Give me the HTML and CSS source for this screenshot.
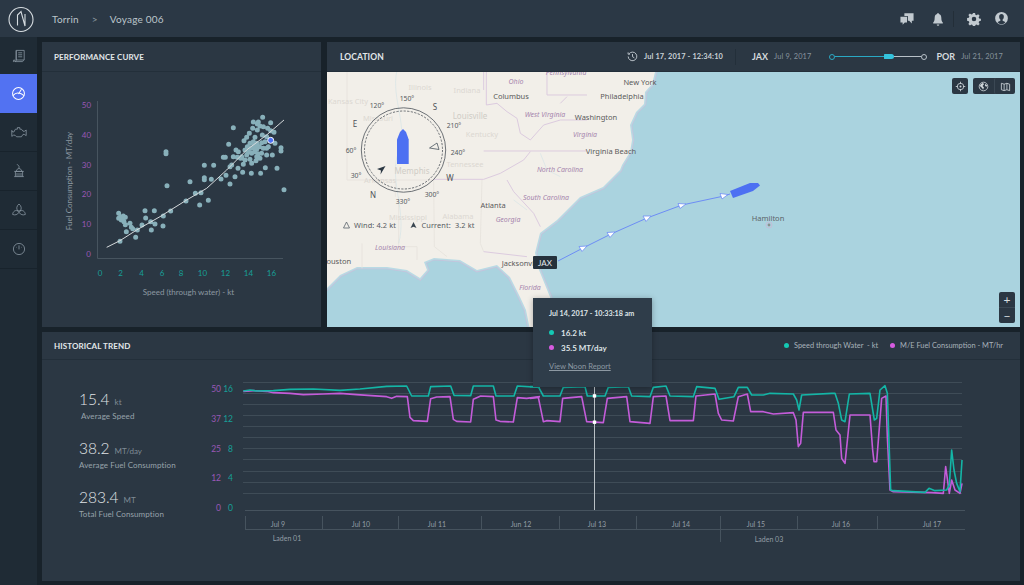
FILE: index.html
```html
<!DOCTYPE html>
<html lang="en">
<head>
<meta charset="utf-8">
<title>Voyage 006</title>
<link rel="stylesheet" href="styles.css">
</head>
<body>
<div class="app">
  <header class="topbar">
    <div class="brand">
      <svg class="logo" viewBox="0 0 42 37"><circle cx="21" cy="19.5" r="12"/><path d="M17.5 25.5V15L21 11.500 25 26V14"/></svg>
    </div>
    <nav class="crumbs"><span>Torrin</span><span class="sep">&gt;</span><span>Voyage 006</span></nav>
    <div class="top-icons">
      <svg class="ti" viewBox="0 0 16 16"><path d="M5 1.500h10.500v8.500h-2v3L10.500 10H9V4.500H5z"/><path d="M.5 5.500h7.500v6.500H5.500L3 14.500V12H.5z"/></svg>
      <svg class="ti bell" viewBox="0 0 16 16"><path d="M8 1.200c.7 0 1 .5 1 1 2 .5 2.800 2.200 2.800 4.300 0 3 .6 4.500 1.700 5.500v1H2.500v-1c1.100-1 1.700-2.500 1.700-5.500C4.200 4.400 5 2.700 7 2.200c0-.5.300-1 1-1z"/><path d="M6.500 14.200h3a1.500 1.500 0 0 1-3 0z"/></svg>
      <span class="top-div"></span>
      <svg class="ti gear" viewBox="0 0 16 16"><path d="M6.800 1h2.400l.4 2 1.300.6 1.800-1.100 1.700 1.700-1.100 1.800.6 1.300 2 .4v2.400l-2 .4-.6 1.300 1.100 1.800-1.700 1.700-1.800-1.100-1.300.6-.4 2H6.800l-.4-2-1.300-.6-1.800 1.100-1.700-1.700 1.100-1.800-.6-1.300-2-.4V6.900l2-.4.6-1.300-1.100-1.800 1.700-1.700 1.800 1.100 1.300-.6zM8 5.400a2.600 2.600 0 1 0 0 5.200 2.600 2.600 0 0 0 0-5.200z" fill-rule="evenodd"/></svg>
      <svg class="ti user" viewBox="0 0 16 16"><path fill-rule="evenodd" d="M8 1a6.800 6.800 0 1 1 0 13.600A6.800 6.800 0 0 1 8 1zm0 2.200c-1.600 0-2.500 1.200-2.500 2.900 0 1.300.5 2.400 1.300 3v1.200c-1.300.4-2.400 1-3 1.700a5.300 5.300 0 0 0 8.400 0c-.6-.7-1.700-1.300-3-1.700V9.100c.8-.6 1.300-1.700 1.300-3 0-1.700-.9-2.900-2.500-2.900z"/></svg>
    </div>
  </header>

  <div class="main">
    <aside class="sidebar">
      <a class="nav-item"><svg viewBox="0 0 20 20"><path d="M6.500 3h10v12h-10zM6.500 3v12.500c0 1-.5 1.500-1.500 1.500h9c1 0 1.500-.7 1.500-2M3 17c1.500 0 2-.5 2-1.800H3.200C3 16 3 16.500 3 17zM9 6h5M9 8.500h5M9 11h5"/></svg></a>
      <a class="nav-item active"><svg viewBox="0 0 20 20"><circle cx="10" cy="10" r="7"/><path d="M3.500 12.500c2-2.400 4.300-3.300 6.500-3 2.200.2 4.300 1.200 6.500 3M10 10.500l3.500-5.500"/></svg></a>
      <a class="nav-item"><svg viewBox="0 0 20 20"><path d="M1 8l1 2h1.500l2-3.500h2.500V4.500h3v2h2l2 2.500h2L19 7.500v7L16.500 13h-1.500l-2 3H7L5 14H3l-2 1.500z"/></svg></a>
      <a class="nav-item"><svg viewBox="0 0 20 20"><path d="M4 17h12M5.500 17v-6.500h9V17M4 10.500h12M6.500 10.500c.5-2.500 1.800-3.500 3.500-3.500s3 1 3.500 3.500M10 7V4L7.500 1.500M7.500 12.500v4.500M10 12.500v4.500M12.500 12.500v4.500"/></svg></a>
      <a class="nav-item"><svg viewBox="0 0 20 20"><path d="M10 2.500c3 2.500 3.500 5.500 1.800 8.500H8.200C6.500 8 7 5 10 2.500zM8.200 11c-3-1-5.500.5-6.200 4.500 3 1.300 6 .5 8-2.500 2 3 5 3.800 8 2.500-.7-4-3.200-5.500-6.200-4.500M10 13l-2-2.500M10 13l2-2.500"/></svg></a>
      <a class="nav-item"><svg viewBox="0 0 20 20"><circle cx="10" cy="10" r="7"/><path d="M10 5.500v5M6.500 7.500l.6.6M13.500 7.500l-.6.6"/></svg></a>
    </aside>

    <div class="content">
      <section class="panel perf">
        <div class="panel-head"><h2>Performance Curve</h2></div>
        <svg class="chart-svg perf-svg" viewBox="42 72 279 255">
          <path class="axis" d="M97.500 101V258.500H283"/>
          <g class="tick-p" text-anchor="middle">
            <text x="86.500" y="108">50</text><text x="86.500" y="138">40</text><text x="86.500" y="167.500">30</text><text x="86.500" y="197">20</text><text x="86.500" y="227">10</text><text x="88.500" y="257">0</text>
          </g>
          <g class="tick-t" text-anchor="middle">
            <text x="100" y="276">0</text><text x="120.500" y="276">2</text><text x="141.500" y="276">4</text><text x="162" y="276">6</text><text x="181" y="276">8</text><text x="202.500" y="276">10</text><text x="225.500" y="276">12</text><text x="248.500" y="276">14</text><text x="271.500" y="276">16</text>
          </g>
          <text class="axis-label" x="188.500" y="295" text-anchor="middle">Speed (through water) - kt</text>
          <text class="axis-label" transform="translate(72 181) rotate(-90)" text-anchor="middle">Fuel Consumption - MT/day</text>
          <g transform="scale(.33333)">
            <path class="dots" d="M356 640h0M362 650h0M370 648h0M376 652h0M356 655h0M364 660h0M372 665h0M376 674h0M390 670h0M394 682h0M379 695h0M398 686h0M412 690h0M407 712h0M360 724h0M426 675h0M435 632h0M437 654h0M463 632h0M452 665h0M465 672h0M454 690h0M490 648h0M489 678h0M512 633h0M498 455h0M498 461h0M501 557h0M558 603h0M570 545h0M586 580h0M603 578h0M599 615h0M625 601h0M613 496h0M641 496h0M613 533h0M613 539h0M634 538h0M663 537h0M670 472h0M676 472h0M678 526h0M690 552h0M690 500h0M695 495h0M686 433h0M700 383h0M705 530h0M714 505h0M730 493h0M728 517h0M754 520h0M782 520h0M796 503h0M831 505h0M852 569h0M843 443h0M843 453h0M817 465h0M800 465h0M790 380h0M788 352h0M812 368h0M760 366h0M775 366h0M772 372h0M780 378h0M803 385h0M812 392h0M822 397h0M772 390h0M758 385h0M748 400h0M740 412h0M732 422h0M765 412h0M787 405h0M800 410h0M795 425h0M785 428h0M805 440h0M800 445h0M825 430h0M790 445h0M778 440h0M770 430h0M760 425h0M750 430h0M742 440h0M735 450h0M745 455h0M755 460h0M765 455h0M770 448h0M760 445h0M752 445h0M762 438h0M768 438h0M740 465h0M725 470h0M715 455h0M708 450h0M700 470h0M712 472h0M722 475h0M735 480h0M750 478h0M768 482h0M755 490h0M770 470h0M785 460h0M775 462h0M780 475h0"/>
            <path class="fit" d="M320 742L360 722 410 690 480 650 560 600 620 565 680 510 740 450 800 405 852 360"/>
            <circle class="hit" cx="812" cy="421" r="9"/>
          </g>
        </svg>
      </section>

      <section class="panel loc">
        <div class="panel-head loc-head">
          <h2>Location</h2>
          <div class="loc-meta">
            <svg class="clock" viewBox="0 0 12 12"><path d="M2.300 3A4.700 4.700 0 1 1 1.300 6M1.200 1.500V3.500H3.200M6 3.300V6.200L8 7.400"/></svg>
            <span class="now">Jul 17, 2017 - 12:34:10</span>
            <span class="v-div"></span>
            <b class="port">JAX</b><span class="port-date">Jul 9, 2017</span>
            <span class="slider"><i class="knob start"></i><i class="done"></i><i class="thumb"></i><i class="rest"></i><i class="knob end"></i></span>
            <b class="port">POR</b><span class="port-date">Jul 21, 2017</span>
          </div>
        </div>
        <div class="map">
          <svg class="map-svg" viewBox="327 72 693 255">
            <defs>
              <path id="land" d="M327 72H655L652 84 645 92 644 104 636 112 630 125 632 140 630 152 622 165 620 170 603 187 580 197 557 220 540 233 535 253 539 270 550 297 556 330H530L526 310 520 297 510 277 497 265 477 270 460 260 434 258 424 262 427 270 420 278 407 270 387 267 357 267 340 275 327 288Z"/>
            </defs>
            <rect class="water" x="327" y="72" width="693" height="255"/>
            <use class="coast-a" href="#land"/>
            <use class="coast-b" href="#land"/>
            <use class="coast-c" href="#land"/>
            <g transform="translate(327 70) scale(.33333)">
              <path class="border-g" d="M320 330L322 530 360 560M465 330L460 520 470 545M105 520V595M215 380V530H270V570M60 0V330H320M205 330V380"/>
              <path class="border" d="M478 5V105L510 100 540 125 570 145 580 190 610 210 650 165 700 150 780 150M470 243H780M610 245L590 270 520 310 470 328H320M540 330L560 365 620 430 640 470M470 545L600 560M660 5V75H780M700 100L720 80M470 5V60"/>
              <path class="river" d="M210 0C190 90 250 170 210 260 190 340 240 430 215 520M640 250L660 300 700 320M560 390L600 420"/>
            </g>
            <g class="lbl-state">
              <text x="566" y="75">Pennsylvania</text><text x="516" y="84">Ohio</text><text x="545" y="117">West Virginia</text><text x="585" y="137">Virginia</text><text x="560" y="172">North Carolina</text><text x="546" y="200">South Carolina</text><text x="508" y="222">Georgia</text><text x="390" y="250">Louisiana</text><text x="530" y="290">Florida</text>
            </g>
            <g class="lbl-faint">
              <text x="348" y="104">Kansas City</text><text x="467" y="93">Indiana</text><text x="420" y="90">Illinois</text><text x="378" y="121">Missouri</text><text x="482" y="137">Kentucky</text><text x="465" y="167">Tennessee</text><text x="380" y="183">Arkansas</text><text x="408" y="220">Mississippi</text><text x="458" y="219">Alabama</text><text class="memphis" x="412" y="174">Memphis</text><text class="memphis" x="470" y="119">Louisville</text>
            </g>
            <g class="lbl-city">
              <text x="511" y="99">Columbus</text><text x="640" y="84.500">New York</text><text x="622" y="99">Philadelphia</text><text x="596" y="120">Washington</text><text x="611" y="154">Virginia Beach</text><text x="493" y="208">Atlanta</text><text x="336" y="264">Houston</text><text x="522" y="266">Jacksonville</text><text class="ham" x="768" y="221">Hamilton</text>
            </g>
            <circle class="ham-ring" cx="769" cy="225" r="3"/><circle class="ham-dot" cx="769" cy="225" r="1.400"/>

            <circle class="ring" cx="403.500" cy="150" r="42.200"/>
            <circle class="ring dash" cx="403.500" cy="150" r="39"/>
            <path class="ship" d="M397 164V139.500L400 132 403 129 406 132 408.700 139.500V164Z"/>
            <path class="arrow-dark" d="M385.500 166L377 169 381 170.500 380.500 174.500Z"/>
            <path class="arrow-open" d="M437 143L429.500 148 439 149.500Z"/>
            <g class="lbl-comp" text-anchor="middle">
              <text x="407" y="100.500">150°</text><text x="377" y="107.500">120°</text><text class="dir" x="435" y="109.500">S</text><text class="dir" x="355" y="127">E</text><text x="454" y="127.500">210°</text><text x="351" y="152.500">60°</text><text x="458" y="154.500">240°</text><text x="356" y="177.500">30°</text><text class="dir" x="450" y="181">W</text><text class="dir" x="373" y="198">N</text><text x="403" y="203.500">330°</text><text x="432" y="196.500">300°</text>
            </g>
            <path class="wind-i" d="M346.500 222L343.500 228H349.500Z"/>
            <path class="cur-i" d="M413.500 222L410.500 228 413.500 226.800 416.500 228Z"/>
            <g class="lbl-wind"><text x="354" y="228">Wind: 4.2 kt</text><text x="421.500" y="228" xml:space="preserve">Current:  3.2 kt</text></g>

            <path class="route" d="M558 261L583 248 611 234 647 218 682 205 724 196 730 194"/>
            <g class="tri">
              <path d="M579 246.500L587 246 582 251.500Z"/><path d="M607 232.500L615 232 610 237.500Z"/><path d="M643 216L651 216 646 221.500Z"/><path d="M678 203.500L686 204 680 208.500Z"/><path d="M720 193.500L728 194.500 722 199Z"/>
            </g>
            <path class="ship" d="M730 191L750 183H758L760 185.500 753 191 733 198Z"/>
          </svg>
          <span class="pin">JAX</span>
          <div class="map-tools">
            <span class="tool"><svg viewBox="0 0 12 12"><circle cx="6" cy="6" r="3.500"/><circle class="f" cx="6" cy="6" r="1.100"/><path d="M6 .8v2.500M6 8.700v2.500M.8 6h2.500M8.700 6h2.500"/></svg></span>
            <span class="tool-group">
              <span class="tool"><svg viewBox="0 0 12 12"><circle cx="6" cy="6" r="4.700"/><path class="f" d="M3 3.500l2.500-1.500 1 1.500L5 5.500l1.500 1.500-1 2.500-1-2L2 5.500zM8 3l2 2-1 1.500L7.500 5z"/></svg></span>
              <span class="tool"><svg viewBox="0 0 12 12"><path d="M1.500 2.500l3 1 3-1 3 1v7l-3-1-3 1-3-1zM4.500 3.500v7M7.500 2.500v7"/></svg></span>
            </span>
          </div>
          <div class="zoom-ctl"><span>+</span><span>−</span></div>
        </div>
      </section>

      <section class="panel trend">
        <div class="panel-head trend-head">
          <h2>Historical Trend</h2>
          <div class="legend">
            <span class="key"><i class="dot teal"></i>Speed through Water&nbsp; - kt</span>
            <span class="key"><i class="dot pink"></i>M/E Fuel Consumption - MT/hr</span>
          </div>
        </div>
        <div class="trend-body">
          <div class="stats">
            <div class="stat"><div class="val">15.4<small>kt</small></div><div class="cap indent">Average Speed</div></div>
            <div class="stat"><div class="val">38.2<small>MT/day</small></div><div class="cap">Average Fuel Consumption</div></div>
            <div class="stat"><div class="val">283.4<small>MT</small></div><div class="cap">Total Fuel Consumption</div></div>
          </div>
          <svg class="chart-svg trend-svg" viewBox="200 360 820 221">
            <path class="grid" d="M243 382.500H962M243 393.500H962M243 404.500H962M243 415.500H962M243 426.500H962M243 437.500H962M243 448.500H962M243 459.500H962M243 471.500H962M243 482.500H962M243 493.500H962"/>
            <path class="base" d="M245 510.500H965M245 529.500H965M245.500 516V529M322.500 516V529M398.500 516V529M481.500 516V529M559.500 516V529M636.500 516V529M720.500 516V542M797.500 516V529M877.500 516V529"/>
            <g class="tick-p big" text-anchor="end"><text x="221" y="392">50</text><text x="221" y="421.500">37</text><text x="221" y="451.500">25</text><text x="221" y="481">12</text><text x="221" y="511">0</text></g>
            <g class="tick-t big" text-anchor="end"><text x="233" y="392">16</text><text x="233" y="421.500">12</text><text x="233" y="451.500">8</text><text x="233" y="481">4</text><text x="233" y="511">0</text></g>
            <g class="date" text-anchor="middle"><text x="278" y="526.500">Jul 9</text><text x="361" y="526.500">Jul 10</text><text x="437" y="526.500">Jul 11</text><text x="521" y="526.500">Jun 12</text><text x="597" y="526.500">Jul 13</text><text x="681" y="526.500">Jul 14</text><text x="756" y="526.500">Jul 15</text><text x="841" y="526.500">Jul 16</text><text x="932" y="526.500">Jul 17</text><text x="287" y="540.500">Laden 01</text><text x="769" y="541.500">Laden 03</text></g>
            <g transform="translate(40 330) scale(.33333)">
              <path class="line-p" d="M610 184L640 182 680 184 700 188 750 190 790 194 850 192 900 190 950 194 1040 200 1055 205 1070 199 1102 200 1110 262 1120 272 1162 274 1172 206 1190 201 1230 200 1240 268 1250 274 1292 276 1300 208 1322 198 1360 200 1368 270 1380 274 1420 276 1432 203 1460 205 1500 200"/>
              <path class="line-t" d="M610 183L630 180 650 183 700 182 750 178 820 177 900 181 960 177 1040 169 1100 168 1115 198 1165 198 1172 170 1232 168 1242 196 1292 197 1300 168 1360 168 1368 198 1422 198 1432 168 1500 172"/>
            </g>
            <g transform="translate(530 370) scale(.33333)">
              <path class="line-p" d="M0 85L25 82 40 155 50 152 90 155 98 85 155 80 170 155 220 158 232 85 290 80 300 155 360 160 370 80 408 78 420 152 490 152 498 78 555 72 565 130 575 150 610 153 625 80 652 72 662 125 700 125 730 132 790 128 798 150 805 230 812 220 820 127 910 127 918 180 930 195 935 265 945 280 960 135 1020 135 1028 240 1032 275 1040 275 1055 85 1068 78 1072 200 1080 360 1090 365 1205 368 1240 370 1247 290 1258 370 1265 330 1275 360 1290 370 1296 340"/>
              <path class="line-t" d="M0 50L25 50 40 78 90 78 100 52 165 50 172 78 225 78 235 52 295 50 305 78 360 80 370 52 408 48 420 78 490 80 500 50 555 55 567 88 612 80 625 52 652 52 665 75 700 75 720 70 790 72 800 90 807 120 815 75 905 70 915 70 925 100 935 150 945 155 958 72 1020 70 1033 150 1040 145 1050 60 1065 47 1072 70 1082 360 1090 362 1185 367 1197 355 1215 362 1250 360 1258 345 1265 240 1272 300 1280 340 1290 365 1296 270"/>
            </g>
            <path class="cursor" d="M594.500 387V510"/>
            <rect class="mark" x="592.800" y="394.200" width="3.400" height="3.400"/>
            <rect class="mark" x="592.800" y="420.500" width="3.400" height="3.400"/>
          </svg>
        </div>
      </section>
    </div>
  </div>

  <div class="tip">
    <div class="tip-date">Jul 14, 2017 - 10:33:18 am</div>
    <div class="tip-row"><i class="dot teal"></i>16.2 kt</div>
    <div class="tip-row"><i class="dot pink"></i>35.5 MT/day</div>
    <a class="tip-link">View Noon Report</a>
  </div>
</div>
</body>
</html>
```

FILE: styles.css
```css
* { box-sizing: border-box; }
html, body { margin: 0; padding: 0; height: 100%; overflow: hidden; }
body { background: #18222a; font-family: Lato, "Noto Sans", sans-serif; color: #c4ccd2; }
.app { position: relative; width: 1024px; height: 585px; display: flex; flex-direction: column; }

.topbar { height: 37px; flex: none; display: flex; align-items: center; background: #2b3845; }
.brand { width: 42px; height: 37px; flex: none; }
.logo { display: block; width: 42px; height: 37px; fill: none; stroke: #d6dce0; stroke-width: 1.100; }
.crumbs { margin-left: 10px; display: flex; font-size: 10px; letter-spacing: .2px; color: #bcc5cb; }
.crumbs .sep { margin: 0 12px 0 13px; color: #8d99a3; }
.top-icons { margin-left: auto; padding-right: 15px; display: flex; align-items: center; }
.ti { width: 14px; height: 14px; fill: #c2cad0; display: block; }
.ti:first-child { margin-right: 17px; }
.bell { margin-right: 8px; }
.top-div { width: 1px; height: 16px; background: #232e38; margin-right: 13px; }
.gear { margin-right: 13px; }
.user { width: 15px; height: 15px; }

.main { flex: 1; display: flex; min-height: 0; }
.sidebar { width: 37px; flex: none; background: #1f2b35; }
.nav-item { display: flex; height: 39px; align-items: center; justify-content: center; border-bottom: 1px solid #18232c; }
.nav-item:first-child { height: 37px; border-bottom: 0; }
.nav-item svg { width: 16px; height: 16px; fill: none; stroke: #8997a2; stroke-width: 1; }
.nav-item.active { background: #5272f2; border-bottom: 0; }
.nav-item.active svg { stroke: #fff; width: 17px; height: 17px; stroke-width: 1.200; }

.content { flex: 1; display: grid; grid-template-columns: 279px 693px; grid-template-rows: 285px 249px; gap: 5px 6px; padding: 5px 0 0 5px; align-content: start; }
.panel { background: #2b3743; display: flex; flex-direction: column; min-width: 0; }
.trend { grid-column: 1 / -1; }
.panel-head { height: 30px; flex: none; display: flex; align-items: center; padding: 0 12px; border-bottom: 1px solid #232f3a; }
.loc-head { padding: 0 17px 0 13px; }
.trend-head { height: 28px; padding-right: 17px; }
h2 { margin: 0; font-size: 8px; font-weight: 700; letter-spacing: .1px; text-transform: uppercase; color: #e3e7ea; }
.loc-head h2 { font-size: 8.500px; }
.loc-meta { margin-left: auto; display: flex; align-items: center; font-size: 7.400px; }
.clock { width: 11px; height: 11px; fill: none; stroke: #c4ccd2; stroke-width: 1; margin-right: 6px; }
.now { font-weight: 700; color: #c8d0d5; letter-spacing: .13px; }
.v-div { width: 1px; height: 16px; background: #232f3a; margin: 0 16px 0 12px; }
.port { font-size: 9px; color: #d5dadd; margin-right: 6px; }
.port-date { color: #87939d; letter-spacing: .15px; }
.slider { display: flex; align-items: center; width: 98px; margin: 0 9px 0 18px; }
.slider i { display: block; flex: none; }
.knob { width: 6px; height: 6px; border-radius: 50%; border: 1px solid #b8c1c8; }
.knob.start { border-color: #2aa9c4; }
.done { height: 1px; width: 49px; background: #2aa9c4; }
.thumb { width: 10px; height: 5px; border-radius: 1px 3px 3px 1px; background: #34c3dd; }
.rest { height: 1px; width: 27px; background: #b8c1c8; }

.map { position: relative; flex: 1; min-height: 0; }
.map-svg { display: block; width: 693px; height: 255px; }
.water { fill: #aad3df; }
.coast-a { fill: none; stroke: #c6c2db; stroke-width: 4.500; }
.coast-b { fill: none; stroke: #b9dae4; stroke-width: 3; }
.coast-c { fill: #f2efe9; stroke: none; }
.border, .border-g, .river { fill: none; vector-effect: non-scaling-stroke; }
.border { stroke: #dccbdf; stroke-width: 1; }
.border-g { stroke: #e6e2dc; stroke-width: .8; }
.river { stroke: #d2e2e6; stroke-width: .6; }
.map text { font-family: "Noto Sans", sans-serif; }
.lbl-state { font-size: 7px; font-style: italic; fill: #a685ad; text-anchor: middle; }
.lbl-faint { font-size: 7.500px; fill: #dcd8d2; text-anchor: middle; }
.lbl-faint .memphis { font-size: 8px; fill: #cfccc6; }
.lbl-city { font-size: 7.500px; fill: #5a5a5a; text-anchor: middle; }
.lbl-city .ham { fill: #5c6468; }
.ham-ring { fill: none; stroke: #c3bdd7; stroke-width: 1; }
.ham-dot { fill: #8a8f8f; }
.ring { fill: none; stroke: #4a5058; stroke-width: .8; }
.ring.dash { stroke-dasharray: 2.200 1.400; }
.ship { fill: #4d70f2; }
.arrow-dark { fill: #2b3743; }
.arrow-open { fill: none; stroke: #4a5560; stroke-width: .8; }
.lbl-comp { font-size: 6.800px; fill: #55595e; }
.lbl-comp .dir { font-size: 8px; fill: #4e5258; }
.wind-i { fill: none; stroke: #59626b; stroke-width: .8; }
.cur-i { fill: #3a4650; }
.lbl-wind { font-size: 7.400px; fill: #565b61; letter-spacing: .1px; }
.route { fill: none; stroke: #6d8df5; stroke-width: 1; }
.tri path { fill: #fff; stroke: #6d8df5; stroke-width: .8; }

.pin { position: absolute; left: 206px; top: 184px; width: 24px; height: 13px; display: flex; align-items: center; justify-content: center; background: #25313c; color: #e6eaec; font-size: 8px; border-radius: 1px; }
.map-tools { position: absolute; top: 6px; right: 5px; display: flex; gap: 5px; }
.tool-group { display: flex; background: #2b3743; border-radius: 2px; }
.tool { width: 16px; height: 16px; display: flex; align-items: center; justify-content: center; background: #2b3743; border-radius: 2px; }
.tool-group .tool { width: 21px; background: none; }
.tool-group .tool + .tool { border-left: 1px solid #3b4854; }
.tool svg { width: 11px; height: 11px; fill: none; stroke: #cfd6da; stroke-width: .9; }
.tool svg .f { fill: #cfd6da; stroke: none; }
.zoom-ctl { position: absolute; right: 5px; bottom: 4px; width: 16px; height: 31px; display: flex; flex-direction: column; background: #2b3743; border-radius: 2px; color: #d8dde0; font-size: 12px; line-height: 15px; text-align: center; }
.zoom-ctl span { flex: 1; }
.zoom-ctl span + span { border-top: 1px solid #3b4854; }

.chart-svg { display: block; flex: none; }
.perf-svg { width: 279px; height: 255px; }
.axis { fill: none; stroke: #47545f; stroke-width: 1; }
.tick-p { font-size: 8px; fill: #9a57b5; }
.tick-t { font-size: 8px; fill: #179f98; }
.big { font-size: 8.500px; }
.axis-label { font-size: 8px; fill: #8c98a1; }
.dots { fill: none; stroke: #a3d2dc; stroke-opacity: .78; stroke-width: 15; stroke-linecap: round; }
.fit { fill: none; stroke: #d6dadc; stroke-width: 3; }
.hit { fill: #4d70f2; stroke: #fff; stroke-width: 3; }

.legend { margin-left: auto; display: flex; gap: 12px; font-size: 7.400px; color: #a8b2ba; }
.key { display: flex; align-items: center; }
.dot { display: block; width: 5px; height: 5px; border-radius: 50%; margin-right: 5px; flex: none; }
.teal { background: #14c9b4; }
.pink { background: #d65be0; }

.trend-body { flex: 1; display: flex; min-height: 0; }
.stats { width: 158px; flex: none; padding: 30px 0 0 37px; }
.stat { height: 49px; }
.val { font-size: 15.500px; font-weight: 300; line-height: 19px; color: #e0e4e7; }
.val small { font-size: 8px; font-weight: 400; color: #7f8b95; margin-left: 5px; }
.cap { font-size: 8px; line-height: 13px; color: #98a3ab; letter-spacing: .1px; margin-top: -2px; }
.cap.indent { padding-left: 2px; }
.trend-svg { width: 820px; height: 221px; }
.grid { fill: none; stroke: #3f4c57; stroke-width: 1; }
.base { fill: none; stroke: #46535e; stroke-width: 1; }
.date { font-size: 7px; fill: #939ea6; }
.line-p, .line-t { fill: none; stroke-width: 1.600; stroke-linejoin: round; vector-effect: non-scaling-stroke; }
.line-p { stroke: #c45cd9; }
.line-t { stroke: #14b5a6; }
.cursor { fill: none; stroke: #b9c0c5; stroke-width: 1; }
.mark { fill: #fff; }

.tip { position: absolute; left: 533px; top: 298px; width: 119px; height: 89px; padding: 11px 16px; background: #2f3d4a; box-shadow: 0 1px 6px rgba(0, 0, 0, .3); font-size: 8px; color: #dfe4e7; }
.tip-date { font-weight: 700; font-size: 7.200px; white-space: nowrap; margin-bottom: 7px; }
.tip-row { display: flex; align-items: center; height: 15px; font-weight: 700; }
.tip-row .dot { margin-right: 7px; }
.tip-link { display: inline-block; margin-top: 6px; font-size: 7.600px; color: #8d99a3; text-decoration: underline; }
```
